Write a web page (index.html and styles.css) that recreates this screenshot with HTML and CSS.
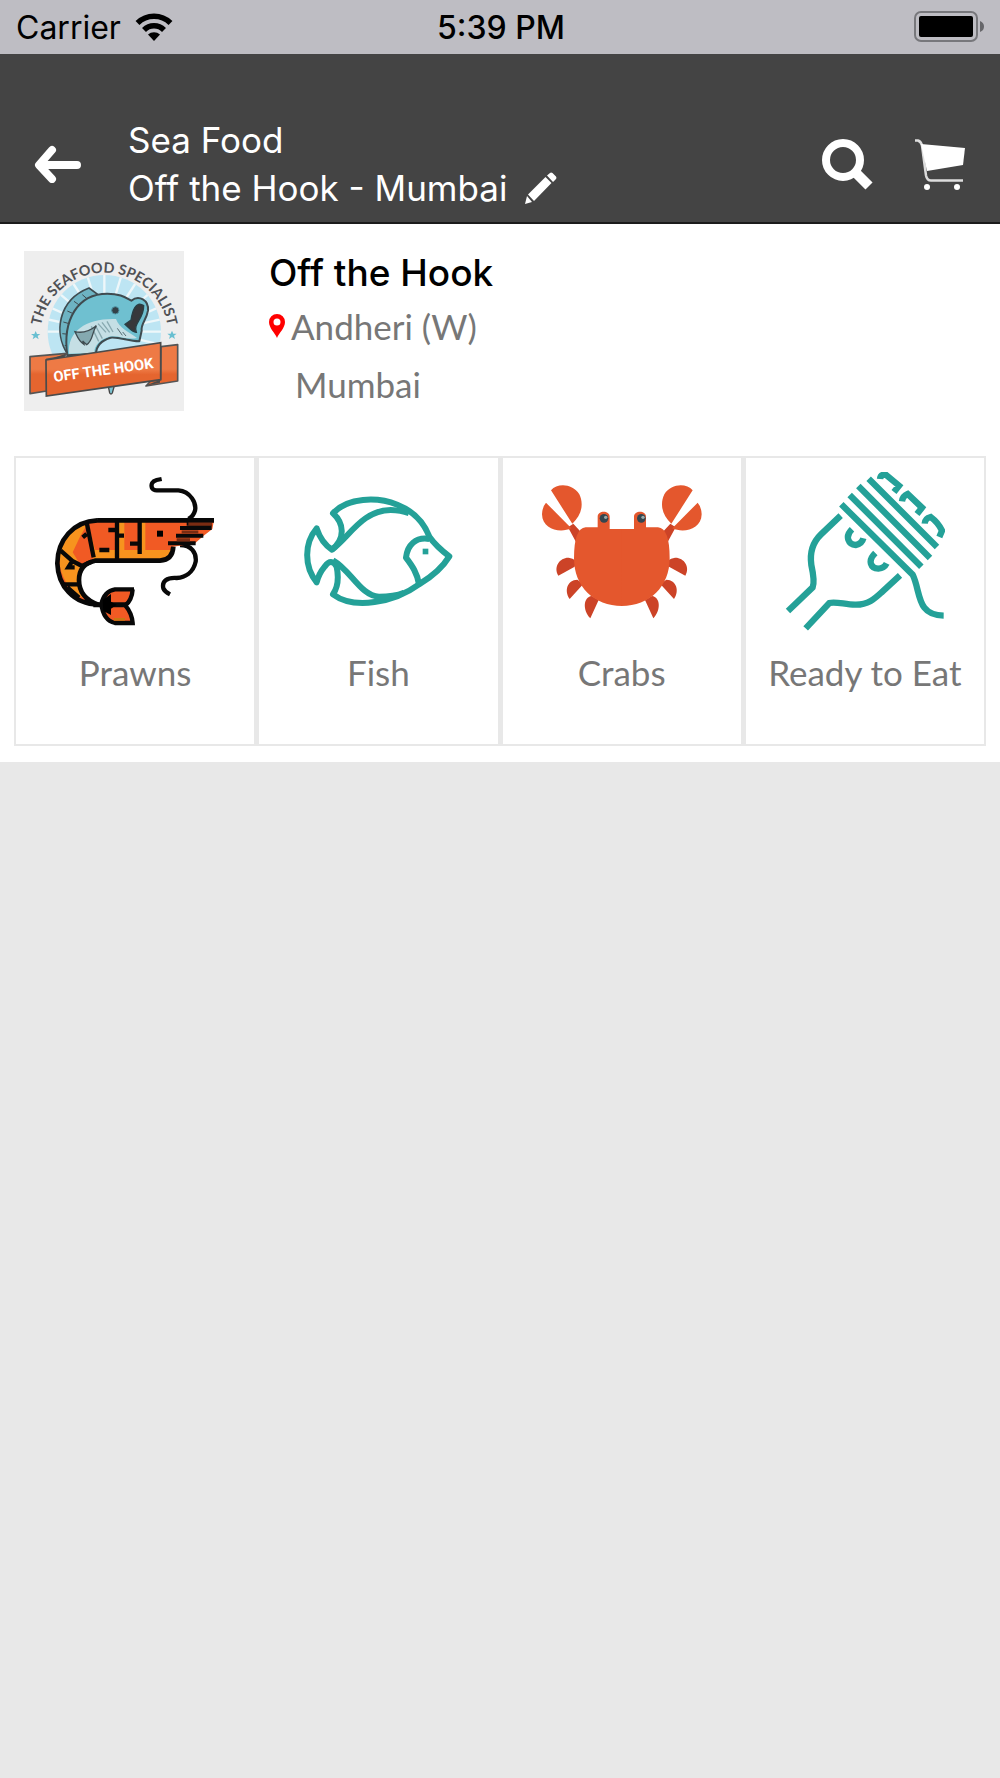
FILE: index.html
```
<!DOCTYPE html>
<html lang="en">
<head>
    <meta charset="UTF-8">
    <meta name="viewport" content="width=device-width, initial-scale=1.0">
    <title>Off the Hook - Mumbai</title>
    <link rel="stylesheet" href="styles.css">
</head>
<body>
    <div class="status-bar">
        <div class="carrier">
            <span>Carrier</span>
            <svg class="wifi" viewBox="0 0 38 28" aria-hidden="true">
                <path d="M2.500 10a23.500 23.500 0 0 1 33 0M9 17a14 14 0 0 1 20 0" fill="none" stroke="#000" stroke-width="5.500"/>
                <path d="M19 28l-6-6.500a9 9 0 0 1 12 0z"/>
            </svg>
        </div>
        <div class="time">5:39 PM</div>
        <svg class="battery" viewBox="0 0 72 32" aria-hidden="true">
            <rect x="1" y="1" width="62" height="29" rx="6" fill="none" stroke="#77777b" stroke-width="2"/>
            <rect x="5" y="5" width="54" height="21" rx="2"/>
            <path d="M66 10q4 1.500 4 5.500t-4 5.500z" fill="#66666a"/>
        </svg>
    </div>

    <header class="header">
        <button class="icon-btn back-btn" aria-label="Back">
            <svg viewBox="0 0 48 38" width="48" height="38">
                <path d="M18 5L5 20l13 14M6 20h37" fill="none" stroke="#fff" stroke-width="8" stroke-linecap="round" stroke-linejoin="round"/>
            </svg>
        </button>
        <div class="header-title">
            <div>Sea Food</div>
            <div class="store-line">
                <span>Off the Hook - Mumbai</span>
                <button class="icon-btn" aria-label="Change store">
                    <svg viewBox="0 0 32 32" width="32" height="32" fill="#fff">
                        <path d="M0 32l2-8 5 6zM3 22.500L20.500 5l6 6L9 29zM22 3.500l3-2.500q1-1 2.500 0l3.500 3.500q1 1.500 0 2.500l-3 3z"/>
                    </svg>
                </button>
            </div>
        </div>
        <div class="header-actions">
            <button class="icon-btn" aria-label="Search">
                <svg viewBox="0 0 52 52" width="52" height="52">
                    <circle cx="21" cy="22" r="17" fill="none" stroke="#fff" stroke-width="8"/>
                    <path d="M33 34l14 14" stroke="#fff" stroke-width="10"/>
                </svg>
            </button>
            <button class="icon-btn" aria-label="Cart">
                <svg viewBox="0 0 52 52" width="52" height="52">
                    <path d="M1 2.500h3q3 1 4 5l4 30q1 5 5 5h32" fill="none" stroke="#ddd" stroke-width="2.500"/>
                    <path d="M7 6l44 4-2 17-36 6z" fill="#fff"/>
                    <circle cx="13" cy="49" r="3" fill="#fff"/>
                    <circle cx="43" cy="49" r="3" fill="#fff"/>
                </svg>
            </button>
        </div>
    </header>

    <main class="store">
        <section class="store-info">
            <svg class="store-logo" viewBox="30 32 480 480" role="img" aria-label="Off the Hook, the seafood specialist">
                <defs>
                    <path id="arc" d="M81 256A193 193 0 0 1 461 256"/>
                    <clipPath id="sun"><circle cx="271" cy="274" r="170"/></clipPath>
                    <linearGradient id="ribbon" x1="0" y1="0" x2="0" y2="1">
                        <stop offset=".5" stop-color="#ee7a45"/>
                        <stop offset=".6" stop-color="#e5652f"/>
                    </linearGradient>
                </defs>
                <rect x="30" y="32" width="480" height="480" fill="#eee"/>
                <circle cx="271" cy="274" r="170" fill="#bde5f3"/>
                <path clip-path="url(#sun)" stroke="#eef7fa" stroke-width="7" d="M271 274V90M271 274L215 90M271 274L327 90M271 274L165 110M271 274L377 110M271 274L125 150M271 274L417 150M271 274L95 195M271 274L447 195M271 274L90 235M271 274L450 235M271 274H450M271 274H90M271 274L450 315"/>
                <!-- fish -->
                <path d="M283 438l4 20q4 6 8 0l6-22z" fill="#7bc3d1" stroke="#444" stroke-width="4"/>
                <path d="M160 340C120 280 130 180 225 143L256 166L205 220L172 330z" fill="#6db3c3" stroke="#3f4b50" stroke-width="5" stroke-linejoin="round"/>
                <path d="M152 316L170 312M145 280l20 2M148 245l21 6M160 212l20 9M180 183l17 12M205 163l16 14" stroke="#3f4b50" stroke-width="3"/>
                <path d="M160 345C145 240 190 160 280 160C320 160 335 172 352 181C375 162 405 180 402 211C397 240 380 250 383 271L376 303C340 302 320 290 290 292C262 300 247 318 246 340z" fill="#6fc0d0" stroke="#3f4b50" stroke-width="6" stroke-linejoin="round"/>
                <path d="M165 340C160 270 220 233 306 236C316 264 345 275 369 293C340 300 310 283 285 289C259 297 240 315 241 337z" fill="#c5dfe5"/>
                <path d="M252 250l24 26M264 246l23 30M279 243l18 32M232 258l22 45M245 257l20 38" stroke="#88a9b0" stroke-width="4"/>
                <path d="M310 264l15 21M326 275l10 12" stroke="#566b72" stroke-width="3"/>
                <path d="M183 274C210 280 230 270 247 256C232 280 238 300 218 313L206 302L210 312C193 302 190 288 183 274z" fill="#85a9b0" stroke="#3f4b50" stroke-width="4"/>
                <path d="M389 196C365 180 355 213 351 239L333 252C344 262 356 277 367 276C356 250 390 235 389 196z" fill="#37383b" stroke="#293f45" stroke-width="4"/>
                <circle cx="304" cy="210" r="11" fill="#334047" stroke="#4e91a1" stroke-width="3"/>
                <!-- ribbon -->
                <path d="M48 349L159 339L150 348L98 357V452L48 460zM441 319L491 313V422L396 437L410 422L440 417z" fill="url(#ribbon)" stroke="#555" stroke-width="5" stroke-linejoin="round"/>
                <path d="M112 355L155 340L150 350zM394 436L438 418V427z" fill="#4c4a48"/>
                <path d="M96 359L440 307V418L97 467z" fill="url(#ribbon)" stroke="#4b4b4b" stroke-width="5"/>
                <path d="M65 272l4 9h10l-8 6 3 10-9-6-9 6 3-10-8-6h10zM474 271l4 9h10l-8 6 3 10-9-6-9 6 3-10-8-6h10z" fill="#68bfd1"/>
                <text class="logo-arc"><textPath href="#arc" startOffset="50%" text-anchor="middle">THE SEAFOOD SPECIALIST</textPath></text>
                <text class="logo-name" x="268" y="404" text-anchor="middle" transform="rotate(-8 268 387)">OFF THE HOOK</text>
            </svg>
            <div class="store-details">
                <h1>Off the Hook</h1>
                <p class="area">
                    <svg viewBox="0 0 16 24" width="16" height="24" aria-hidden="true">
                        <path d="M8 24C6 19 0 14 0 8a8 8 0 0 1 16 0c0 6-6 11-8 16zM8 4.500a3.500 3.500 0 1 0 0 7 3.500 3.500 0 0 0 0-7z" fill="#f00" fill-rule="evenodd"/>
                    </svg>
                    Andheri (W)
                </p>
                <p class="city">Mumbai</p>
            </div>
        </section>

        <nav class="categories">
            <a class="category" href="#prawns">
                <svg viewBox="135 66 480 480" aria-hidden="true">
                    <path d="M455 87L440 90Q420 96 426 114Q430 121 440 121H505C542 124 560 160 555 182Q550 200 535 207M510 285C545 285 560 310 557 335C550 368 525 382 500 384C470 382 455 394 460 415Q464 425 480 433" fill="none" stroke="#090909" stroke-width="13"/>
                    <path d="M262 211H612L607 237L580 258L555 280L490 290Q488 330 450 332H255C218 340 207 365 207 390C207 425 225 450 265 464C190 462 144 408 142 340C142 270 190 214 262 211z" fill="#f15a24"/>
                    <path d="M232 222L210 260L188 307L208 340L217 355L203 398L218 443Q165 415 150 350Q140 270 205 232zM234 218L255 300H485Q478 325 450 328H250zM327 214H343V328H327zM392 214H406V328H392z" fill="#f7931e"/>
                    <path d="M262 211H612M490 290Q488 330 450 332H255C218 340 207 365 207 390C207 425 225 450 265 464C190 462 144 408 142 340C142 270 190 214 262 211" fill="none" stroke="#080808" stroke-width="14"/>
                    <path d="M231 222L251 322M321 215V330M389 215V312M152 302L187 333L175 352H194M187 333L222 351M158 403H206M172 412L207 443M230 252L218 262M295 240H319M325 257H342M384 281H360M298 300H268M215 348L245 335" fill="none" stroke="#080808" stroke-width="13"/>
                    <path d="M441 242h18v18h-18z"/>
                    <path d="M530 221H606M510 234H605M498 257H580M474 280H557" stroke="#090909" stroke-width="12"/>
                    <path d="M535 222H606M515 246H565M500 269H540" stroke="#7b2c12" stroke-width="9"/>
                    <path d="M372 418H315Q283 423 274 462Q280 511 315 519H368Q366 490 346 466Q366 450 368 418z" fill="#f15a24" stroke="#080808" stroke-width="13"/>
                    <path d="M250 464H350" stroke="#080808" stroke-width="15"/>
                    <path d="M278 450L303 432V455L320 464L303 476V495L280 483z"/>
                    <path d="M312 508H345" stroke="#c97813" stroke-width="8"/>
                </svg>
                <span>Prawns</span>
            </a>
            <a class="category" href="#fish">
                <svg viewBox="132 66 480 480" fill="none" stroke="#24a198" stroke-width="18" stroke-linejoin="round" aria-hidden="true">
                    <path d="M237 190C280 142 370 140 430 164C480 184 510 218 526 260C545 287 565 303 586 319C566 352 530 382 495 403C420 458 300 480 237 433C253 410 255 385 248 350Q232 322 212 350Q195 370 188 397C150 350 150 280 188 235Q202 278 234 299C275 265 270 220 237 190z"/>
                    <path d="M234 299C285 262 325 180 410 180Q440 180 465 190M237 331C290 360 320 438 375 440Q420 440 450 428M526 267C485 260 460 285 456 323C475 348 490 370 495 403"/>
                    <path d="M506 296h17v17h-17z" fill="#24a198" stroke="none"/>
                </svg>
                <span>Fish</span>
            </a>
            <a class="category" href="#crabs">
                <svg viewBox="124 66 480 480" aria-hidden="true">
                    <g id="crab-side">
                        <path d="M202 232L218 221L240 245L228 280zM222 350L173 377C157 350 178 322 204 323Q216 324 226 332zM248 402L207 447C190 423 199 390 230 389zM294 450L269 505C245 480 248 441 273 438z" fill="#cc4327"/>
                        <path d="M215 221L151 121C170 99 215 100 236 133C251 165 241 197 215 221zM212 235C180 250 125 240 124 193Q125 170 136 158z" fill="#e4572d"/>
                        <path d="M364 468C280 468 220 410 220 325Q220 235 255 232H291V200C291 180 327 180 327 200V237H364z" fill="#e4572d"/>
                    </g>
                    <use href="#crab-side" transform="matrix(-1 0 0 1 727 0)"/>
                    <circle cx="310" cy="205" r="13" fill="#34464f"/>
                    <circle cx="422" cy="205" r="13" fill="#34464f"/>
                    <circle cx="315" cy="202" r="5" fill="#9aa9aa"/>
                    <circle cx="427" cy="202" r="5" fill="#9aa9aa"/>
                </svg>
                <span>Crabs</span>
            </a>
            <a class="category" href="#ready-to-eat">
                <svg viewBox="132 66 480 480" fill="none" stroke="#24a198" stroke-width="19" aria-hidden="true">
                    <path d="M299 197L240 253C212 280 206 310 211 345Q222 395 215 412L141 483M194 535L265 459C285 453 315 465 345 464C385 464 405 442 425 424L477 376"/>
                    <path d="M301 163L515 374C540 425 525 496 608 497M326 135L541 350M352 108L567 324M383 86L588 291"/>
                    <path d="M417 87Q418 74 433 73L474 107L459 126M483 154Q485 138 500 132L543 173L528 192M551 221Q552 205 569 201Q592 218 603 242L595 261M333 238C310 260 323 284 344 285Q363 282 367 265M403 309C378 333 390 355 412 356Q430 354 437 340"/>
                </svg>
                <span>Ready to Eat</span>
            </a>
        </nav>
    </main>
</body>
</html>
```
FILE: styles.css
```
:root {
    --page-bg: #e8e8e8;
    --bar-bg: #444;
    --text-muted: #777;
}

* {
    box-sizing: border-box;
    margin: 0;
    padding: 0;
}

body {
    font-family: 'Inter', sans-serif;
    background-color: var(--page-bg);
    color: #000;
}

.status-bar {
    display: grid;
    grid-template-columns: 1fr auto 1fr;
    align-items: center;
    height: 54px;
    padding: 0 14px 0 16px;
    background-color: #bebdc3;
    font-size: 32px;
}

.carrier {
    display: flex;
    align-items: center;
    gap: 14px;
}

.wifi {
    width: 38px;
    height: 28px;
}

.time {
    font-weight: 500;
}

.battery {
    width: 72px;
    height: 32px;
    justify-self: end;
}

.header {
    display: flex;
    align-items: center;
    padding: 62px 34px 10px;
    background-color: var(--bar-bg);
    border-bottom: 2px solid #1c1c1c;
    color: #fff;
    font-size: 35px;
    line-height: 48px;
}

.icon-btn {
    display: flex;
    background: none;
    border: none;
    cursor: pointer;
}

.header-title {
    flex: 1;
    margin-left: 46px;
}

.store-line {
    display: flex;
    align-items: center;
    gap: 18px;
}

.header-actions {
    display: flex;
    gap: 40px;
}

.store {
    padding: 27px 14px 16px;
    background-color: #fff;
}

.store-info {
    display: flex;
    gap: 85px;
    padding: 0 10px;
    margin-bottom: 45px;
}

.store-logo {
    width: 160px;
    height: 160px;
}

.logo-arc {
    font-family: 'Lato', sans-serif;
    font-size: 43px;
    font-weight: 700;
    fill: #505155;
}

.logo-name {
    font-family: 'Roboto', sans-serif;
    font-size: 44px;
    font-weight: 700;
    fill: #fff;
}

.store-details {
    font-family: 'Lato', sans-serif;
    font-size: 35px;
    color: var(--text-muted);
}

.store-details h1 {
    font-family: 'Inter', sans-serif;
    font-size: 37px;
    font-weight: 500;
    line-height: 43px;
    color: #000;
}

.area {
    display: flex;
    align-items: center;
    gap: 6px;
    line-height: 64px;
}

.city {
    padding-left: 26px;
    line-height: 53px;
}

.categories {
    display: grid;
    grid-template-columns: repeat(4, 1fr);
    gap: 1px;
    background-color: var(--page-bg);
}

.category {
    display: flex;
    flex-direction: column;
    align-items: center;
    gap: 20px;
    padding: 14px 0 52px;
    background-color: #fff;
    border: 2px solid var(--page-bg);
    color: var(--text-muted);
    font-family: 'Lato', sans-serif;
    font-size: 35px;
    line-height: 40px;
    text-decoration: none;
}

.category svg {
    width: 160px;
    height: 160px;
}
```
